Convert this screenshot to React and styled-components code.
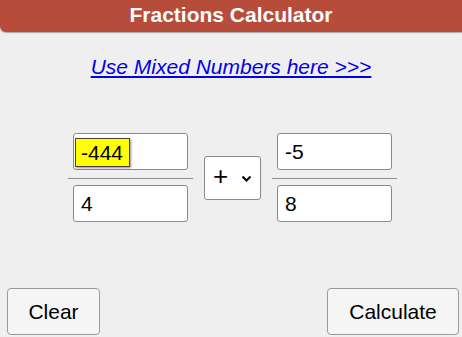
import styled, { createGlobalStyle } from "styled-components";

const GlobalStyle = createGlobalStyle`
  html, body {
    margin: 0;
    padding: 0;
    background: #efefef;
    font-family: "Liberation Sans", Arial, sans-serif;
  }
`;

export default function App() {
  return (
    <>
      <GlobalStyle />
      <Page>
        <Header>Fractions Calculator</Header>
        <MixedLink href="#">Use Mixed Numbers here &gt;&gt;&gt;</MixedLink>

        <FractionRow>
          <Fraction>
            <FieldWrap>
              <Field defaultValue="" />
              <Highlight>-444</Highlight>
            </FieldWrap>
            <Bar />
            <Field defaultValue="4" />
          </Fraction>

          <Operator>
            <span>+</span>
            <svg width="11" height="7" viewBox="0 0 11 7">
              <path d="M1.5 1.5 L5.5 5.5 L9.5 1.5" fill="none" stroke="#000" strokeWidth="2" />
            </svg>
          </Operator>

          <Fraction>
            <Field defaultValue="-5" />
            <Bar />
            <Field defaultValue="8" />
          </Fraction>
        </FractionRow>

        <Footer>
          <Button width="93px">Clear</Button>
          <Button width="132px">Calculate</Button>
        </Footer>
      </Page>
    </>
  );
}

const Page = styled.div`
  height: 337px;
  display: flex;
  flex-direction: column;
  align-items: center;
  overflow: hidden;
`;

const Header = styled.div`
  width: 100%;
  height: 32px;
  background: #b84c3b;
  color: #ffffff;
  font-weight: bold;
  font-size: 21px;
  line-height: 30px;
  text-align: center;
  border-bottom-left-radius: 6px;
  box-shadow: 0 1px 1px #a9a9a9;
`;

const MixedLink = styled.a`
  margin-top: 21px;
  color: #0000ee;
  font-style: italic;
  font-size: 21px;
  line-height: 28px;
  text-decoration: underline;
`;

const FractionRow = styled.div`
  margin-top: 52px;
  display: flex;
  align-items: center;
  gap: 11px;
  margin-left: 3px;
`;

const Fraction = styled.div`
  display: flex;
  flex-direction: column;
  align-items: center;
  width: 125px;
`;

const FieldWrap = styled.div`
  position: relative;
`;

const Field = styled.input`
  box-sizing: border-box;
  width: 115px;
  height: 37px;
  border: 1px solid #8a8a8a;
  border-radius: 3px;
  background: #ffffff;
  padding: 0 7px;
  font-family: "Liberation Sans", Arial, sans-serif;
  font-size: 21px;
  color: #000;
  outline: none;
`;

const Highlight = styled.span`
  position: absolute;
  left: 2px;
  top: 5px;
  height: 29px;
  box-sizing: border-box;
  padding: 0 6px 0 5px;
  background: #ffff00;
  border: 1px solid #444;
  box-shadow: 1px 1px 2px rgba(0, 0, 0, 0.45);
  font-size: 21px;
  line-height: 27px;
  color: #000;
`;

const Bar = styled.div`
  width: 100%;
  height: 1px;
  background: #8c8c8c;
  margin: 8px 0 6px;
`;

const Operator = styled.div`
  box-sizing: border-box;
  width: 57px;
  height: 44px;
  border: 1px solid #8a8a8a;
  border-radius: 3px;
  background: #ffffff;
  display: flex;
  align-items: center;
  justify-content: center;
  gap: 13px;
  font-size: 26px;
  padding-bottom: 2px;

  svg {
    margin-top: 3px;
  }
`;

const Footer = styled.div`
  margin-top: auto;
  width: 100%;
  box-sizing: border-box;
  display: flex;
  justify-content: space-between;
  padding: 0 3px 2px 7px;
`;

const Button = styled.button`
  width: ${(p) => p.width};
  height: 47px;
  border: 1px solid #9a9a9a;
  border-radius: 4px;
  background: #f5f5f5;
  font-family: "Liberation Sans", Arial, sans-serif;
  font-size: 21px;
  color: #000;
`;
